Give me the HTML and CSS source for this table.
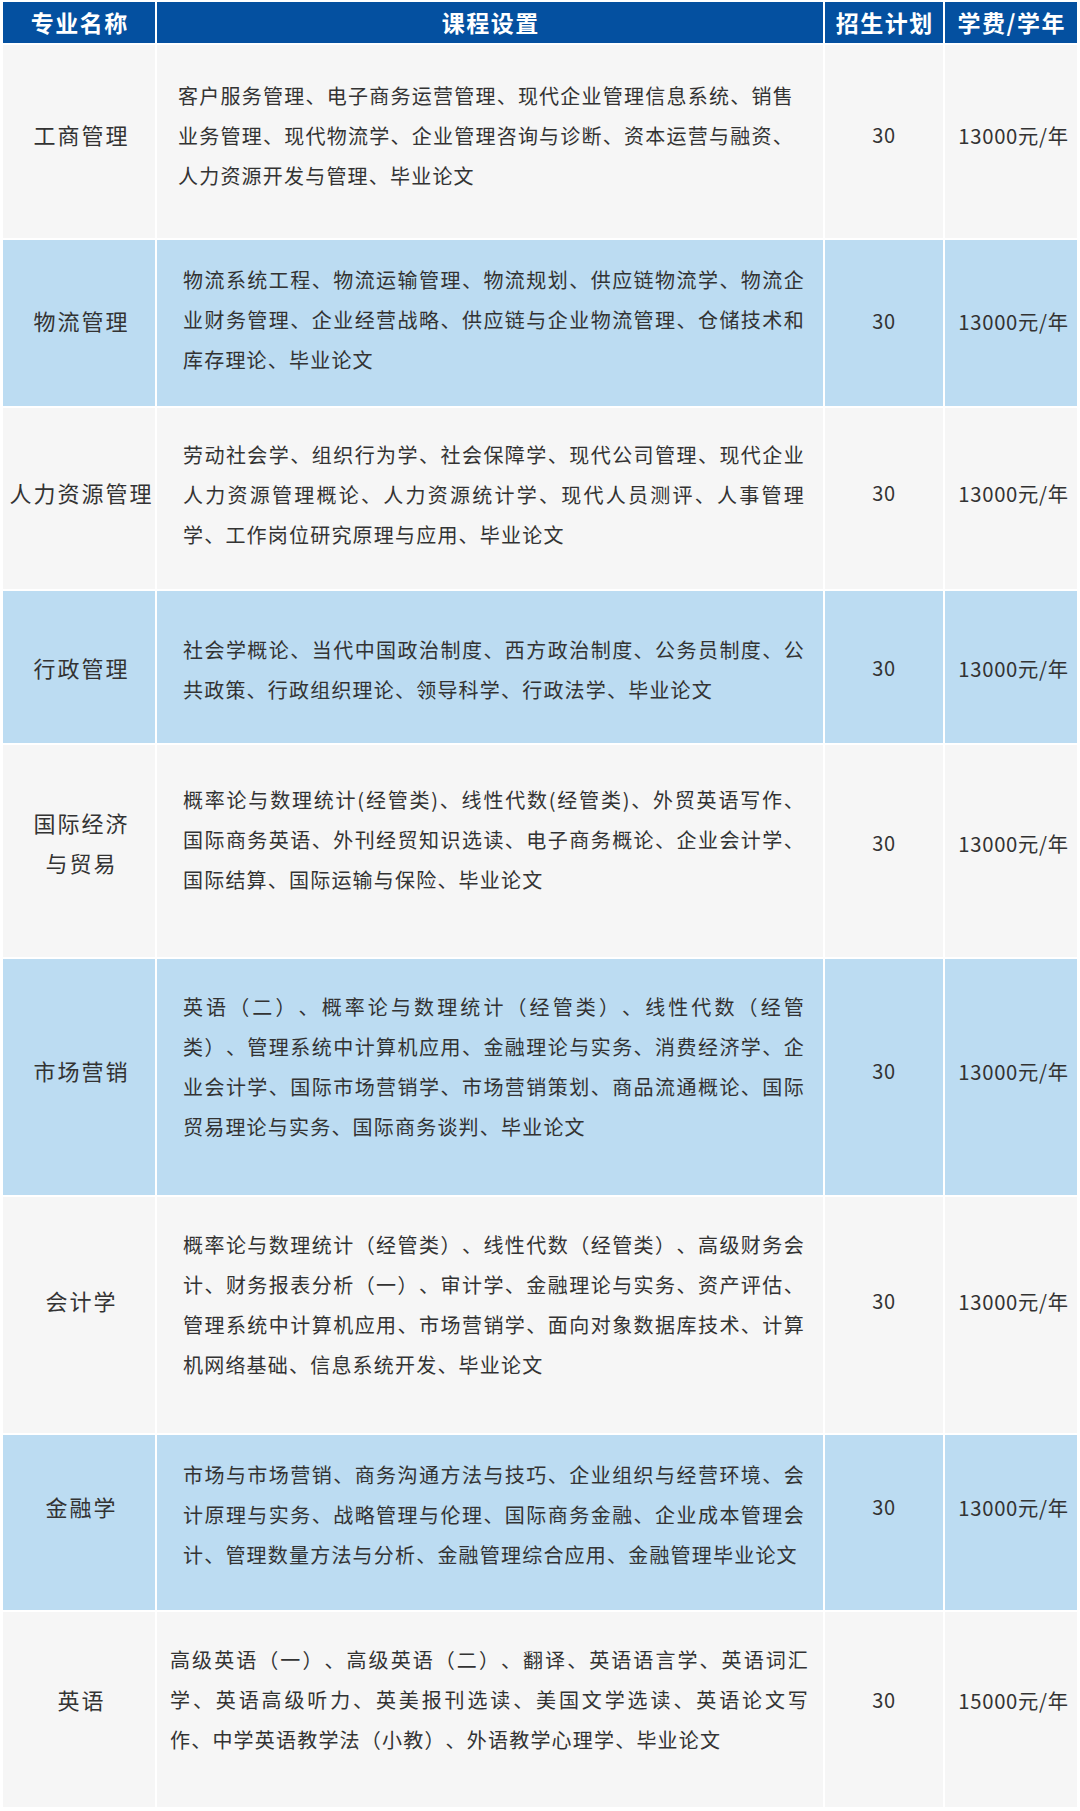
FILE: index.html
```html
<!DOCTYPE html>
<html lang="zh-CN">
<head>
<meta charset="utf-8">
<title>专业设置</title>
<link rel="stylesheet" href="styles.css">
</head>
<body>
<table class="plan">
  <colgroup>
    <col class="c-name">
    <col class="c-course">
    <col class="c-num">
    <col class="c-fee">
  </colgroup>
  <thead>
    <tr class="head">
      <th>专业名称</th>
      <th>课程设置</th>
      <th>招生计划</th>
      <th>学费/学年</th>
    </tr>
  </thead>
  <tbody>
    <tr class="row light r1">
      <td class="name">工商管理</td>
      <td class="course">
        <span class="ln">客户服务管理、电子商务运营管理、现代企业管理信息系统、销售</span>
        <span class="ln">业务管理、现代物流学、企业管理咨询与诊断、资本运营与融资、</span>
        <span class="ln">人力资源开发与管理、毕业论文</span>
      </td>
      <td class="num">30</td>
      <td class="fee">13000元/年</td>
    </tr>
    <tr class="row blue r2">
      <td class="name">物流管理</td>
      <td class="course">
        <span class="ln">物流系统工程、物流运输管理、物流规划、供应链物流学、物流企</span>
        <span class="ln">业财务管理、企业经营战略、供应链与企业物流管理、仓储技术和</span>
        <span class="ln">库存理论、毕业论文</span>
      </td>
      <td class="num">30</td>
      <td class="fee">13000元/年</td>
    </tr>
    <tr class="row light r3">
      <td class="name">人力资源管理</td>
      <td class="course">
        <span class="ln">劳动社会学、组织行为学、社会保障学、现代公司管理、现代企业</span>
        <span class="ln">人力资源管理概论、人力资源统计学、现代人员测评、人事管理</span>
        <span class="ln">学、工作岗位研究原理与应用、毕业论文</span>
      </td>
      <td class="num">30</td>
      <td class="fee">13000元/年</td>
    </tr>
    <tr class="row blue r4">
      <td class="name">行政管理</td>
      <td class="course">
        <span class="ln">社会学概论、当代中国政治制度、西方政治制度、公务员制度、公</span>
        <span class="ln">共政策、行政组织理论、领导科学、行政法学、毕业论文</span>
      </td>
      <td class="num">30</td>
      <td class="fee">13000元/年</td>
    </tr>
    <tr class="row light r5">
      <td class="name">国际经济<br>与贸易</td>
      <td class="course">
        <span class="ln">概率论与数理统计(经管类)、线性代数(经管类)、外贸英语写作、</span>
        <span class="ln">国际商务英语、外刊经贸知识选读、电子商务概论、企业会计学、</span>
        <span class="ln">国际结算、国际运输与保险、毕业论文</span>
      </td>
      <td class="num">30</td>
      <td class="fee">13000元/年</td>
    </tr>
    <tr class="row blue r6">
      <td class="name">市场营销</td>
      <td class="course">
        <span class="ln">英语（二）、概率论与数理统计（经管类）、线性代数（经管</span>
        <span class="ln">类）、管理系统中计算机应用、金融理论与实务、消费经济学、企</span>
        <span class="ln">业会计学、国际市场营销学、市场营销策划、商品流通概论、国际</span>
        <span class="ln">贸易理论与实务、国际商务谈判、毕业论文</span>
      </td>
      <td class="num">30</td>
      <td class="fee">13000元/年</td>
    </tr>
    <tr class="row light r7">
      <td class="name">会计学</td>
      <td class="course">
        <span class="ln">概率论与数理统计（经管类）、线性代数（经管类）、高级财务会</span>
        <span class="ln">计、财务报表分析（一）、审计学、金融理论与实务、资产评估、</span>
        <span class="ln">管理系统中计算机应用、市场营销学、面向对象数据库技术、计算</span>
        <span class="ln">机网络基础、信息系统开发、毕业论文</span>
      </td>
      <td class="num">30</td>
      <td class="fee">13000元/年</td>
    </tr>
    <tr class="row blue r8">
      <td class="name">金融学</td>
      <td class="course">
        <span class="ln">市场与市场营销、商务沟通方法与技巧、企业组织与经营环境、会</span>
        <span class="ln">计原理与实务、战略管理与伦理、国际商务金融、企业成本管理会</span>
        <span class="ln">计、管理数量方法与分析、金融管理综合应用、金融管理毕业论文</span>
      </td>
      <td class="num">30</td>
      <td class="fee">13000元/年</td>
    </tr>
    <tr class="row light r9">
      <td class="name">英语</td>
      <td class="course">
        <span class="ln">高级英语（一）、高级英语（二）、翻译、英语语言学、英语词汇</span>
        <span class="ln">学、英语高级听力、英美报刊选读、美国文学选读、英语论文写</span>
        <span class="ln">作、中学英语教学法（小教）、外语教学心理学、毕业论文</span>
      </td>
      <td class="num">30</td>
      <td class="fee">15000元/年</td>
    </tr>
  </tbody>
</table>
</body>
</html>
```

FILE: styles.css
```css
html, body {
  margin: 0;
  padding: 0;
  background: #ffffff;
}

body {
  font-family: "Noto Sans CJK SC", "Noto Sans", sans-serif;
  color: #333333;
  text-spacing-trim: space-all;
}

.plan {
  table-layout: fixed;
  width: 1078px;
  border-collapse: separate;
  border-spacing: 2px;
  margin: 0 0 0 1px;
}

.c-name { width: 152px; }
.c-course { width: 666px; }
.c-num { width: 118px; }
.c-fee { width: 132px; }

/* header */
.head { height: 41px; }

.head th {
  background: #0450a0;
  color: #ffffff;
  font-size: 23px;
  font-weight: 700;
  letter-spacing: 1.5px;
  line-height: 30px;
  text-align: center;
  vertical-align: middle;
  padding: 0 0 2px 1.5px;
}

/* body cells: --pb is the offset shared by the row,
   --cpb the offset of the course text */
.row {
  --pt: 0px;
  --pb: 0px;
  --cpb: 0px;
  --cpl: 26px;
  --cpr: 18px;
}

.row td {
  padding: var(--pt) 0 calc(var(--pb) + 4px) 0;
  vertical-align: middle;
  text-align: center;
  line-height: 40px;
}

.light td { background: #f6f6f6; }
.blue td { background: #bcdcf2; }

.row .name {
  font-size: 22px;
  letter-spacing: 2px;
  padding-left: 5px;
  padding-bottom: calc(var(--pb) + 6px);
}

.num,
.fee {
  font-size: 20px;
  letter-spacing: 0.7px;
}

.row .fee {
  font-size: 20.3px;
  padding-left: 5px;
}

.row .course {
  text-align: left;
  font-size: 20px;
  letter-spacing: 1.2px;
  padding: var(--pt) var(--cpr) calc(var(--cpb) + 1px) var(--cpl);
}

.ln {
  display: block;
  text-align: justify;
  text-align-last: justify;
}

.ln:last-child {
  text-align-last: left;
}

/* row heights and content offsets */
.r1 { height: 193px; --pb: 10px; --cpb: 10px; --cpl: 21px; --cpr: 29px; }
.r2 { height: 166px; --pb: 0px; --cpb: 5px; }
.r3 { height: 181px; --pb: 7px; --cpb: 7px; }
.r4 { height: 152px; --pt: 6px; --pb: 0px; --cpb: 0px; }
.r5 { height: 212px; --pb: 13px; --cpb: 22px; }
.r6 { height: 236px; --pb: 8px; --cpb: 20px; }
.r7 { height: 236px; --pb: 25px; --cpb: 20px; }
.r8 { height: 175px; --pb: 28px; --cpb: 14px; }
.r9 { height: 195px; --pb: 16px; --cpb: 19px; --cpl: 13px; --cpr: 14px; }
```
